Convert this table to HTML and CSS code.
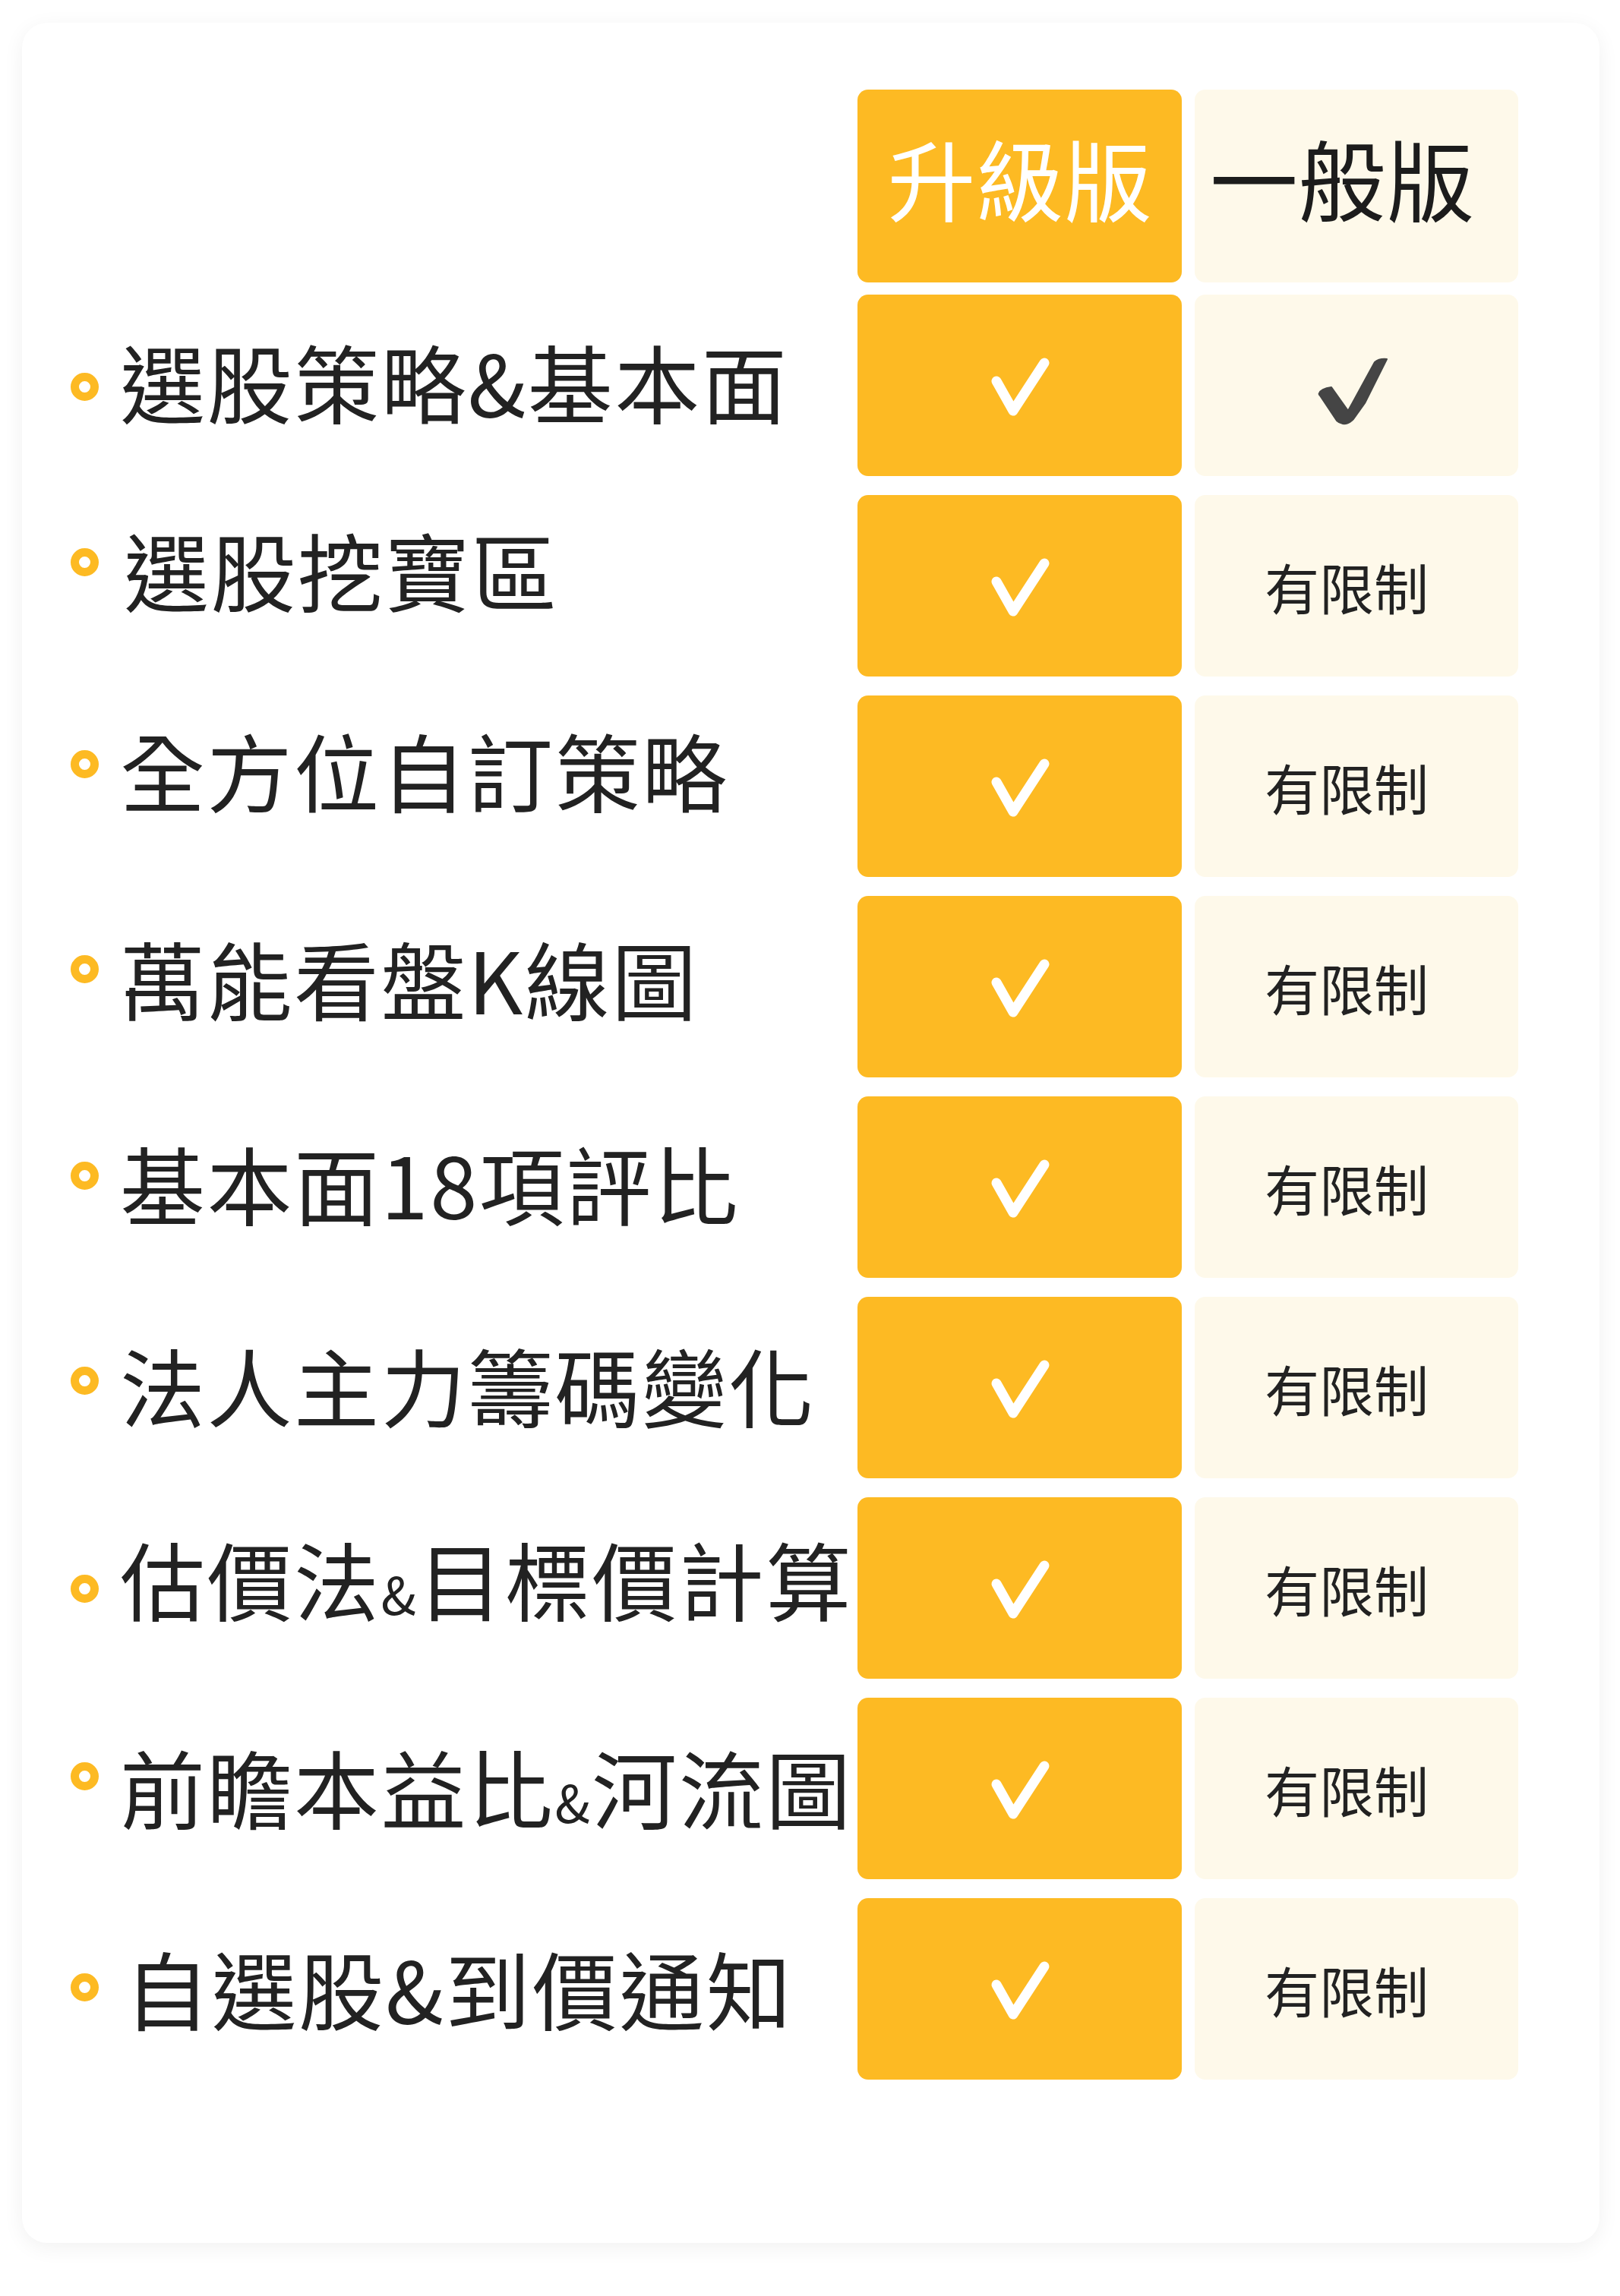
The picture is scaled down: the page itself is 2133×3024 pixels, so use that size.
FILE: index.html
```html
<!DOCTYPE html>
<html lang="zh-Hant">
<head>
<meta charset="utf-8">
<title>升級版 vs 一般版</title>
<link rel="stylesheet" href="styles.css">
</head>
<body>
<div class="page">
  <div class="card">
    <div class="grid header">
      <div class="blank"></div>
      <div class="cell cell--pro head">升級版</div>
      <div class="cell cell--basic head head--basic">一般版</div>
    </div>
    <div class="rows">
      <div class="grid row r1">
        <div class="label"><span class="dot"></span><span class="label-text">選股策略&amp;基本面</span></div>
        <div class="cell cell--pro"><svg class="check" viewBox="0 0 100 100" width="100" height="100"><polyline points="21,42 43,81 84,18" fill="none" stroke="#fff" stroke-width="13" stroke-linecap="round" stroke-linejoin="round"/></svg></div>
        <div class="cell cell--basic"><svg class="check-dark" viewBox="0 0 100 100" width="100" height="100"><path d="M7 52 Q9 46 23 44 L45 75 L80 11 Q86 6 96 7 L67 65 L52 86 Q45 93 38 92 Q33 91 30 88 L8 55 Q6 53 7 52 Z" fill="#454545" stroke="#454545" stroke-width="2" stroke-linejoin="round"/></svg></div>
      </div>
      <div class="grid row r2">
        <div class="label"><span class="dot"></span><span class="label-text">選股挖寶區</span></div>
        <div class="cell cell--pro"><svg class="check" viewBox="0 0 100 100" width="100" height="100"><polyline points="21,42 43,81 84,18" fill="none" stroke="#fff" stroke-width="13" stroke-linecap="round" stroke-linejoin="round"/></svg></div>
        <div class="cell cell--basic limit">有限制</div>
      </div>
      <div class="grid row r3">
        <div class="label"><span class="dot"></span><span class="label-text">全方位自訂策略</span></div>
        <div class="cell cell--pro"><svg class="check" viewBox="0 0 100 100" width="100" height="100"><polyline points="21,42 43,81 84,18" fill="none" stroke="#fff" stroke-width="13" stroke-linecap="round" stroke-linejoin="round"/></svg></div>
        <div class="cell cell--basic limit">有限制</div>
      </div>
      <div class="grid row r4">
        <div class="label"><span class="dot"></span><span class="label-text">萬能看盤K線圖</span></div>
        <div class="cell cell--pro"><svg class="check" viewBox="0 0 100 100" width="100" height="100"><polyline points="21,42 43,81 84,18" fill="none" stroke="#fff" stroke-width="13" stroke-linecap="round" stroke-linejoin="round"/></svg></div>
        <div class="cell cell--basic limit">有限制</div>
      </div>
      <div class="grid row r5">
        <div class="label"><span class="dot"></span><span class="label-text">基本面18項評比</span></div>
        <div class="cell cell--pro"><svg class="check" viewBox="0 0 100 100" width="100" height="100"><polyline points="21,42 43,81 84,18" fill="none" stroke="#fff" stroke-width="13" stroke-linecap="round" stroke-linejoin="round"/></svg></div>
        <div class="cell cell--basic limit">有限制</div>
      </div>
      <div class="grid row r6">
        <div class="label"><span class="dot"></span><span class="label-text">法人主力籌碼變化</span></div>
        <div class="cell cell--pro"><svg class="check" viewBox="0 0 100 100" width="100" height="100"><polyline points="21,42 43,81 84,18" fill="none" stroke="#fff" stroke-width="13" stroke-linecap="round" stroke-linejoin="round"/></svg></div>
        <div class="cell cell--basic limit">有限制</div>
      </div>
      <div class="grid row r7">
        <div class="label"><span class="dot"></span><span class="label-text">估價法<span class="amp">&amp;</span>目標價計算</span></div>
        <div class="cell cell--pro"><svg class="check" viewBox="0 0 100 100" width="100" height="100"><polyline points="21,42 43,81 84,18" fill="none" stroke="#fff" stroke-width="13" stroke-linecap="round" stroke-linejoin="round"/></svg></div>
        <div class="cell cell--basic limit">有限制</div>
      </div>
      <div class="grid row r8">
        <div class="label"><span class="dot"></span><span class="label-text">前瞻本益比<span class="amp">&amp;</span>河流圖</span></div>
        <div class="cell cell--pro"><svg class="check" viewBox="0 0 100 100" width="100" height="100"><polyline points="21,42 43,81 84,18" fill="none" stroke="#fff" stroke-width="13" stroke-linecap="round" stroke-linejoin="round"/></svg></div>
        <div class="cell cell--basic limit">有限制</div>
      </div>
      <div class="grid row r9">
        <div class="label"><span class="dot"></span><span class="label-text">自選股&amp;到價通知</span></div>
        <div class="cell cell--pro"><svg class="check" viewBox="0 0 100 100" width="100" height="100"><polyline points="21,42 43,81 84,18" fill="none" stroke="#fff" stroke-width="13" stroke-linecap="round" stroke-linejoin="round"/></svg></div>
        <div class="cell cell--basic limit">有限制</div>
      </div>
    </div>
  </div>
</div>
</body>
</html>
```
FILE: styles.css
```css
body {
  margin: 0;
  background: #ffffff;
  font-family: "Noto Sans CJK TC", "Noto Sans", sans-serif;
  color: #222222;
}

.page {
  padding: 30px 0 40px 29px;
}

.card {
  width: 2077px;
  box-sizing: border-box;
  padding: 88px 107px 215px 64px;
  background: #ffffff;
  border-radius: 33px;
  box-shadow: 0 6px 28px rgba(0, 0, 0, 0.06);
}

.grid {
  display: grid;
  grid-template-columns: 1019px 427px 426px;
  column-gap: 17px;
}

.header {
  height: 254px;
  margin-bottom: 16px;
}

.rows {
  display: flex;
  flex-direction: column;
  gap: 25px;
}

.row {
  height: 239px;
}

.cell {
  border-radius: 14px;
  display: flex;
  align-items: center;
  justify-content: center;
}

.cell--pro {
  background: #fdba23;
}

.cell--basic {
  background: #fef9ea;
}

.head {
  font-size: 116px;
  font-weight: 400;
  line-height: 1;
  color: #ffffff;
  padding-bottom: 26px;
  box-sizing: border-box;
}

.head--basic {
  color: #1c1c1c;
  padding-right: 38px;
}

.limit {
  font-size: 72px;
  font-weight: 400;
  line-height: 1;
  color: #222222;
  padding-right: 26px;
}

.check {
  transform: translate(-2px, 2px);
}

.check-dark {
  transform: translate(-6px, 8px);
}

.label {
  display: flex;
  align-items: center;
  white-space: nowrap;
}

.dot {
  flex: none;
  width: 37px;
  height: 37px;
  box-sizing: border-box;
  border: 11.5px solid #fdba23;
  border-radius: 50%;
}

.label-text {
  margin-left: 28px;
  font-size: 112px;
  font-weight: 400;
  letter-spacing: 2.5px;
  line-height: 1;
  color: #222222;
}

.amp {
  font-size: 68px;
}

.r1 .dot { transform: translateY(2px); }
.r1 .label-text { transform: translateY(-7px); }
.r2 .dot { transform: translateY(-31px); }
.r2 .label-text { transform: translate(5px, -23px); }
.r3 .dot { transform: translateY(-29px); }
.r3 .label-text { transform: translateY(-23px); }
.r4 .dot { transform: translateY(-23px); }
.r4 .label-text { transform: translateY(-13px); }
.r5 .dot { transform: translateY(-15px); }
.r5 .label-text { transform: translateY(-7px); }
.r6 .dot { transform: translateY(-9px); }
.r6 .label-text { transform: translateY(-5px); }
.r7 .dot { transform: translateY(1px); }
.r7 .label-text { transform: translateY(-14px); }
.r8 .dot { transform: translateY(-16px); }
.r8 .label-text { transform: translateY(-4px); }
.r9 .dot { transform: translateY(-2px); }
.r9 .label-text { transform: translate(6px, -3px); }
```
